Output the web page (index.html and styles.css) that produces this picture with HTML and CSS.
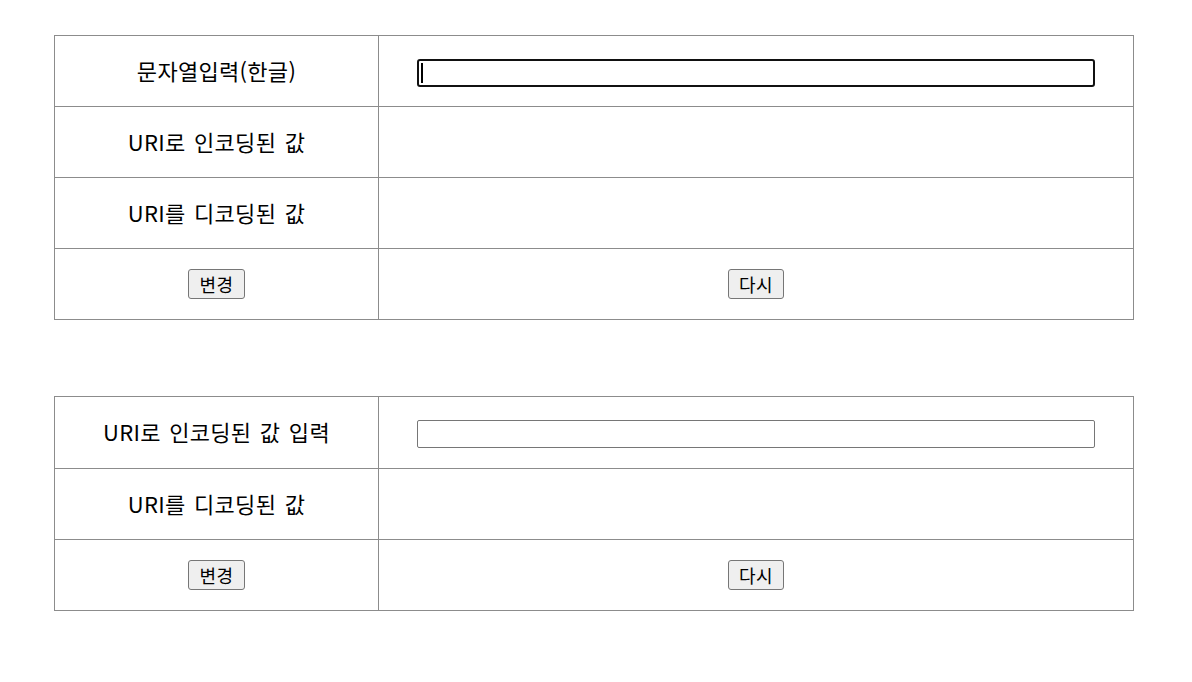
FILE: index.html
```html
<!DOCTYPE html>
<html lang="ko">
<head>
<meta charset="utf-8">
<title>URI 인코딩</title>
<link rel="stylesheet" href="styles.css">
</head>
<body>
<div class="page">
  <table class="grid">
    <tr>
      <td class="label">문자열입력(한글)</td>
      <td class="value"><span class="field"><input type="text" class="text-input is-focused"><span class="caret"></span></span></td>
    </tr>
    <tr>
      <td class="label">URI로 인코딩된 값</td>
      <td class="value"></td>
    </tr>
    <tr>
      <td class="label">URI를 디코딩된 값</td>
      <td class="value"></td>
    </tr>
    <tr>
      <td class="action"><button type="button" class="btn">변경</button></td>
      <td class="action"><button type="button" class="btn">다시</button></td>
    </tr>
  </table>

  <table class="grid second">
    <tr class="tall">
      <td class="label">URI로 인코딩된 값 입력</td>
      <td class="value"><span class="field"><input type="text" class="text-input"></span></td>
    </tr>
    <tr>
      <td class="label">URI를 디코딩된 값</td>
      <td class="value"></td>
    </tr>
    <tr>
      <td class="action"><button type="button" class="btn">변경</button></td>
      <td class="action"><button type="button" class="btn">다시</button></td>
    </tr>
  </table>
</div>
</body>
</html>
```
FILE: styles.css
```css
html, body {
  margin: 0;
  padding: 0;
  background: #ffffff;
}

body {
  font-family: "Noto Sans CJK KR", "Noto Sans", sans-serif;
  color: #000;
}

.page {
  padding: 35px 0 0 54px;
}

.grid {
  width: 1080px;
  border-collapse: collapse;
  table-layout: fixed;
}

.grid.second {
  margin-top: 76px;
}

.grid td {
  border: 1px solid #8c8c8c;
  height: 70px;
  padding: 0;
  text-align: center;
  vertical-align: middle;
  font-size: 22px;
  letter-spacing: 0.3px;
  word-spacing: 2px;
}

.grid td.label {
  height: 67px;
  padding-bottom: 3px;
}

.grid td.value {
  height: 67px;
  padding-top: 3px;
}

.grid tr.tall td.label,
.grid tr.tall td.value {
  height: 68px;
}

.grid tr td:first-child {
  width: 323px;
}

.field {
  position: relative;
  display: block;
  width: 90%;
  margin: 0 auto;
}

.text-input {
  box-sizing: border-box;
  width: 100%;
  height: 28px;
  border: 1px solid #767676;
  border-radius: 2px;
  padding: 1px 2px;
  font-size: 16px;
  font-family: inherit;
  background: #fff;
  display: block;
}

.text-input.is-focused {
  border: 2px solid #111;
  border-radius: 3px;
  outline: none;
}

.caret {
  position: absolute;
  left: 4px;
  top: 4px;
  width: 2px;
  height: 20px;
  background: #000;
}

.btn {
  display: block;
  margin: 0 auto;
  font-family: "Noto Sans CJK KR", "Noto Sans", sans-serif;
  font-size: 18px;
  line-height: 22px;
  height: 30px;
  padding: 1px 10px;
  background: #efefef;
  border: 1px solid #767676;
  border-radius: 3px;
  color: #000;
  letter-spacing: 0.5px;
}
```
